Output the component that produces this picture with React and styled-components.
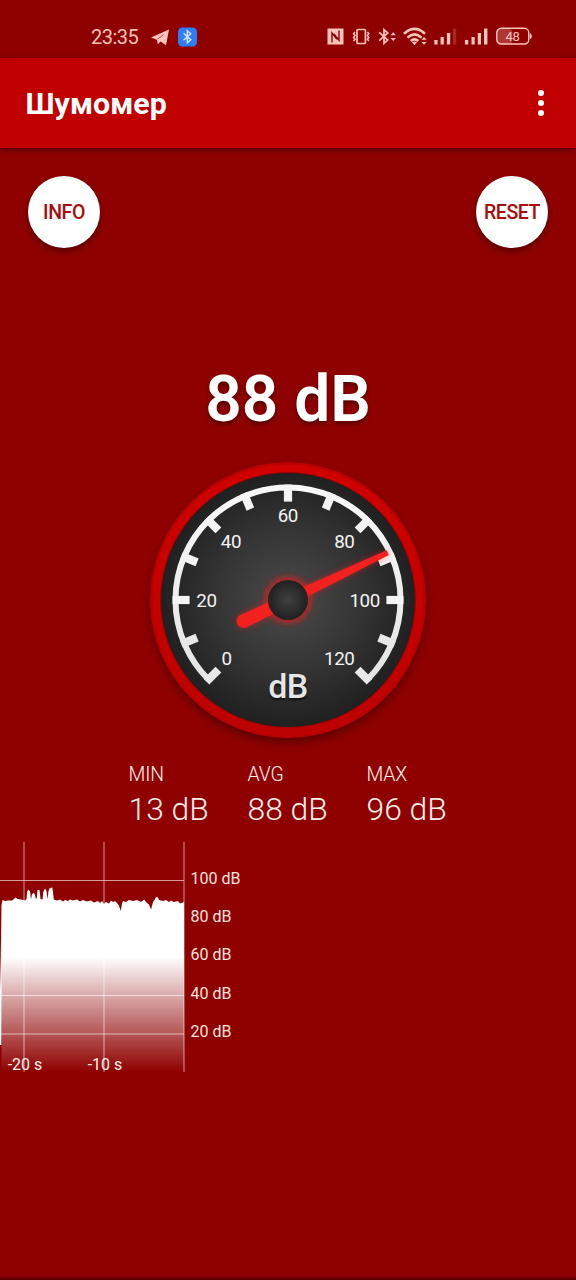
import React from 'react'
import styled, { createGlobalStyle } from 'styled-components'

const TINT = '#ffc4bc'

const STATS = [
  { label: 'MIN', value: 13 },
  { label: 'AVG', value: 88 },
  { label: 'MAX', value: 96 },
]

const GAUGE_LABELS = [
  { text: '0', x: 76.7, y: 196.3 },
  { text: '20', x: 56.5, y: 138.2 },
  { text: '40', x: 81, y: 79.9 },
  { text: '60', x: 137.8, y: 53.9 },
  { text: '80', x: 194.3, y: 79.9 },
  { text: '100', x: 214.7, y: 138.2 },
  { text: '120', x: 189.3, y: 196.3 },
]

// sound history: x in px, y is the top of the filled area
const HISTORY = [
  [1.5, 63], [2.5, 58], [5, 59], [8, 58.5], [12, 58.5], [14, 57], [15.5, 55.5], [17.5, 57], [21, 57.5],
  [25, 58.5], [26.5, 57], [27.3, 49], [28.5, 47.5], [30, 49.5], [31, 57.5], [32, 52], [34, 51], [35, 53],
  [36, 57.5], [37, 55], [37.5, 48], [39.5, 48], [40.5, 57], [42.5, 57.5], [43.3, 50], [45, 46.5],
  [46.5, 49], [47.5, 57.5], [48.5, 49], [50, 45.5], [51, 46.5], [52.2, 45], [53, 50], [53.8, 57.5],
  [57, 58.5], [60, 57.5], [63, 59.5], [65, 58], [68, 59], [70, 57.5], [73, 58.5], [77, 57.5], [80, 59.5],
  [83, 58], [87, 59.5], [91, 58.5], [94, 60.5], [98, 59], [100, 61], [102, 59], [104, 62], [106, 60],
  [109, 61.5], [111, 58.5], [113, 60], [115, 59], [117, 61], [119, 63.5], [120.7, 69], [122, 62],
  [123, 59], [126, 60], [129, 58], [133, 59], [137, 58], [141, 60], [144, 57.5], [147, 61], [149, 62.5],
  [151, 67.5], [153, 60], [154.5, 58], [156, 55], [158, 55.5], [159, 58], [163, 59], [166, 58],
  [169, 60], [171, 58.5], [174, 60], [178, 59], [180, 61.5], [184, 60],
]

const areaPath = `M1.5 230 L${HISTORY.map((p) => p.join(' ')).join(' L')} L184 230 Z`

const Statusbar = () => (
  <StatusRow>
    <Clock>23:35</Clock>
    <StatusIcon width="18" height="20" $gap={13}>
      <path d="M0 10.6 18 2.5 15 18.2 9.6 14.6 6.8 17.2 5.9 12.8Z" fill={TINT} />
      <path d="M6.6 12.2 12.5 7.6" stroke="#8f0000" strokeWidth="0.6" />
    </StatusIcon>
    <StatusIcon width="19" height="20" $gap={9}>
      <rect y="0.5" width="19" height="19" rx="4.5" fill="#2c7df6" />
      <path d="M5.5 6.3 12.8 12.7 9.3 15.8V3.8L12.8 6.8 5.5 13.3" fill="none" stroke="#dbe8ff" strokeWidth="1.4" />
    </StatusIcon>
    <Spacer />
    <StatusIcon width="17" height="20">
      <path d="M0.5 1.5H16.5V17.5H0.5Z" fill={TINT} />
      <path d="M5 15.5V6L10 12.2M12 3.5V13.3L7 7" fill="none" stroke="#8f0000" strokeWidth="1.4" />
    </StatusIcon>
    <StatusIcon width="18" height="20" $gap={8}>
      <rect x="5" y="2.5" width="8.4" height="14" rx="0.8" fill="none" stroke={TINT} strokeWidth="1.7" />
      <path d="M3 5 1.6 6.8 3 8.6 1.6 10.4 3 12.2 1.6 14M15.4 5 16.8 6.8 15.4 8.6 16.8 10.4 15.4 12.2 16.8 14" fill="none" stroke={TINT} strokeWidth="1.6" />
    </StatusIcon>
    <StatusIcon width="18" height="20" $gap={8}>
      <path d="M1.2 5.3 9.8 13 6 16.4V2.6L9.8 6 1.2 13.7" fill="none" stroke={TINT} strokeWidth="1.7" />
      <path d="M12.5 8.2 15.2 5.2 17.9 8.2ZM12.5 11H17.9L15.2 14Z" fill={TINT} />
    </StatusIcon>
    <StatusIcon width="25" height="20" $gap={7}>
      <path d="M1 6.7Q11.5 -3 22 6.7M4.5 10.6Q11.5 4 18.5 10.6M7.7 14Q11.5 10.6 15.3 14" fill="none" stroke={TINT} strokeWidth="2.6" />
      <path d="M9 15.2Q11.5 13.7 14 15.2L11.5 18.3Z" fill={TINT} />
      <path d="M18.3 12.8 21 10 23.7 12.8ZM18.3 15H23.7L21 17.8Z" fill={TINT} />
    </StatusIcon>
    <StatusIcon width="24" height="20" $gap={5}>
      <path d="M1.3 13H4.6V17.5H1.3ZM7.6 10H10.8V17.5H7.6ZM13.9 6H17.2V17.5H13.9Z" fill={TINT} />
      <path d="M20 1.5H23.2V17.5H20Z" fill={TINT} opacity="0.2" />
    </StatusIcon>
    <StatusIcon width="24" height="20" $gap={7}>
      <path d="M0.9 13H4.2V17.5H0.9ZM7.5 10H10.7V17.5H7.5ZM13.8 6H17V17.5H13.8ZM20 1.5H23.4V17.5H20Z" fill={TINT} />
    </StatusIcon>
    <StatusIcon width="36" height="20" $gap={8}>
      <rect x="1.5" y="2" width="15" height="15" rx="4" fill={TINT} opacity="0.28" />
      <rect x="0.8" y="1.3" width="32" height="15.8" rx="4.5" fill="none" stroke={TINT} strokeWidth="1.5" />
      <path d="M34 6.2Q35.8 6.6 35.8 9.2Q35.8 11.8 34 12.2Z" fill={TINT} />
      <BatteryText x="16.4" y="14">48</BatteryText>
    </StatusIcon>
  </StatusRow>
)

const Gauge = () => {
  const ticks = []
  for (let a = -135; a <= 135; a += 22.5) ticks.push(a)

  return (
    <GaugeSvg width="276" height="276" viewBox="0 0 276 276">
      <defs>
        <radialGradient id="face" cx="50%" cy="50%" r="50%">
          <stop offset="0" stopColor="#4a4a4a" />
          <stop offset="0.55" stopColor="#353535" />
          <stop offset="1" stopColor="#202020" />
        </radialGradient>
        <linearGradient id="rim" x1="0" y1="0" x2="0" y2="1">
          <stop offset="0" stopColor="#d00000" />
          <stop offset="1" stopColor="#bd0000" />
        </linearGradient>
        <radialGradient id="hub">
          <stop offset="0" stopColor="#424242" />
          <stop offset="1" stopColor="#202020" />
        </radialGradient>
        <linearGradient id="scale" x1="0" y1="0" x2="0" y2="1">
          <stop offset="0" stopColor="#f8f8f8" />
          <stop offset="1" stopColor="#e4e4e4" />
        </linearGradient>
        <filter id="blur" x="-100%" y="-50%" width="300%" height="200%">
          <feGaussianBlur stdDeviation="3.5" />
        </filter>
      </defs>

      <circle cx="138" cy="138" r="138" fill="#b80000" />
      <circle cx="138" cy="138" r="131.5" fill="none" stroke="url(#rim)" strokeWidth="8" />
      <circle cx="138" cy="138" r="127.5" fill="url(#face)" stroke="#a00000" strokeWidth="1" />

      <path d="M58.5 217.5A112.5 112.5 0 1 1 217.5 217.5" fill="none" stroke="url(#scale)" strokeWidth="6" />
      {ticks.map((a) => (
        <rect key={a} x="133.9" y="22.6" width="8.2" height="17" fill={Math.abs(a) > 90 ? '#e8e8e8' : '#f4f4f4'} transform={`rotate(${a} 138 138)`} />
      ))}
      {GAUGE_LABELS.map((l) => (
        <GaugeLabel key={l.text} x={l.x} y={l.y + 6.5}>{l.text}</GaugeLabel>
      ))}
      <GaugeUnit x="138" y="236">dB</GaugeUnit>

      <g transform="rotate(64.6 138 138)">
        <path d="M135.7 28H140.3L145 187A7 7 0 0 1 131 187Z" fill="#ff1818" opacity="0.5" filter="url(#blur)" />
      </g>
      <circle cx="138" cy="138" r="23" fill="#ff1818" opacity="0.7" filter="url(#blur)" />
      <path d="M135.4 27.5H140.6L145 187A7 7 0 0 1 131 187Z" fill="#f32020" transform="rotate(64.6 138 138)" />
      <circle cx="138" cy="138" r="20" fill="url(#hub)" />
    </GaugeSvg>
  )
}

const History = () => (
  <ChartRow>
    <svg width="185" height="231" viewBox="0 0 185 231">
      <defs>
        <linearGradient id="area" gradientUnits="userSpaceOnUse" x1="0" y1="115" x2="0" y2="230">
          <stop offset="0" stopColor="#fff" />
          <stop offset="1" stopColor="#fff" stopOpacity="0" />
        </linearGradient>
      </defs>
      <path d={areaPath} fill="url(#area)" />
      <path d="M0 150 1.8 60V150L1.3 203H0Z" fill="#fff" />
      <path d="M0 38.5H184M0 153.5H184M0 192H184" stroke="#fff" strokeOpacity="0.6" strokeWidth="1.1" />
      <path d="M24 0V230M104 0V230M184 0V230" stroke="#fff" strokeOpacity="0.4" strokeWidth="1.5" />
      <AxisText x="25" y="227.5">-20 s</AxisText>
      <AxisText x="105" y="227.5">-10 s</AxisText>
    </svg>
    <Levels>
      {[100, 80, 60, 40, 20].map((v) => (
        <span key={v}>{v} dB</span>
      ))}
    </Levels>
  </ChartRow>
)

const App = () => {
  return (
    <Screen>
      <GlobalStyle />
      <Statusbar />
      <AppBar>
        <h1>Шумомер</h1>
        <MenuButton aria-label="menu">
          <i />
          <i />
          <i />
        </MenuButton>
      </AppBar>
      <Actions>
        <RoundButton>INFO</RoundButton>
        <RoundButton>RESET</RoundButton>
      </Actions>
      <Reading>88 dB</Reading>
      <Gauge />
      <Stats>
        {STATS.map((s) => (
          <Stat key={s.label}>
            <h3>{s.label}</h3>
            <p>{s.value} dB</p>
          </Stat>
        ))}
      </Stats>
      <History />
    </Screen>
  )
}

export default App

const GlobalStyle = createGlobalStyle`
* {
    box-sizing: border-box;
}

body {
    margin: 0;
    background: #8f0000;
    font-family: Roboto, 'Liberation Sans', sans-serif;
    color: #fff;
}

h1, h3, p {
    margin: 0;
}
`

const Screen = styled.div`
display: flex;
flex-direction: column;
width: 100%;
height: 1280px;
background: linear-gradient(#8f0000 1275px, #5a0000 1280px);
overflow: hidden;
`

const StatusRow = styled.div`
display: flex;
align-items: center;
flex: none;
height: 58px;
padding: 16px 44px 0 91px;
`

const Clock = styled.span`
width: 47px;
font-size: 20px;
line-height: 20px;
letter-spacing: -0.5px;
white-space: nowrap;
color: ${TINT};
`

const StatusIcon = styled.svg`
flex: none;
margin-left: ${(props) => props.$gap || 0}px;
`

const Spacer = styled.div`
flex: 1;
`

const BatteryText = styled.text`
font-size: 13px;
letter-spacing: -0.3px;
text-anchor: middle;
fill: ${TINT};
`

const AppBar = styled.header`
display: flex;
align-items: center;
justify-content: space-between;
flex: none;
height: 90px;
padding: 0 32px 0 25.5px;
background: #c00000;
box-shadow: 0 2px 6px rgba(0, 0, 0, 0.45);

h1 {
    padding-top: 2px;
    font-size: 30.4px;
    font-weight: 700;
    line-height: 34px;
}
`

const MenuButton = styled.button`
display: flex;
flex-direction: column;
gap: 4px;
padding: 0;
border: 0;
background: none;

i {
    width: 6px;
    height: 6px;
    border-radius: 50%;
    background: #fff;
}
`

const Actions = styled.div`
display: flex;
justify-content: space-between;
flex: none;
padding: 28px 28px 0;
`

const RoundButton = styled.button`
width: 72px;
height: 72px;
padding: 1px 0 0;
border: 0;
border-radius: 50%;
background: #fff;
color: #a80c0c;
font-family: inherit;
font-size: 19.5px;
font-weight: 500;
letter-spacing: -0.4px;
box-shadow: 0 4px 6px rgba(0, 0, 0, 0.35);
`

const Reading = styled.div`
flex: none;
margin-top: 114px;
height: 77px;
font-size: 64px;
font-weight: 600;
line-height: 76px;
text-align: center;
text-shadow: 0 3px 4px rgba(0, 0, 0, 0.4);
`

const GaugeSvg = styled.svg`
flex: none;
align-self: center;
margin-top: 23px;
border-radius: 50%;
box-shadow: 0 5px 9px rgba(0, 0, 0, 0.35);
`

const GaugeLabel = styled.text`
font-size: 18.8px;
letter-spacing: -0.4px;
text-anchor: middle;
fill: #f4f4f4;
`

const GaugeUnit = styled.text`
font-size: 34px;
font-weight: 500;
letter-spacing: -0.5px;
text-anchor: middle;
fill: #e6e6e6;
text-shadow: 0 2px 2px rgba(0, 0, 0, 0.6);
`

const Stats = styled.div`
display: grid;
grid-template-columns: repeat(3, 119px);
flex: none;
margin-top: 25px;
padding-left: 128.5px;
height: 79px;
`

const Stat = styled.div`
font-weight: 300;
color: #fff0ec;

h3 {
    font-size: 19.4px;
    font-weight: 300;
    letter-spacing: -0.1px;
    line-height: 24px;
}

p {
    margin-top: 3px;
    font-size: 31.8px;
    line-height: 38px;
    white-space: nowrap;
}
`

const ChartRow = styled.div`
display: flex;
flex: none;
height: 231px;

svg {
    flex: none;
}
`

const AxisText = styled.text`
font-size: 16px;
text-anchor: middle;
fill: #fff0ec;
`

const Levels = styled.div`
display: flex;
flex-direction: column;
padding: 17.6px 0 0 5.5px;

span {
    height: 38.4px;
    font-size: 16px;
    line-height: 38.4px;
    color: #ffe4de;
    white-space: nowrap;
}
`
